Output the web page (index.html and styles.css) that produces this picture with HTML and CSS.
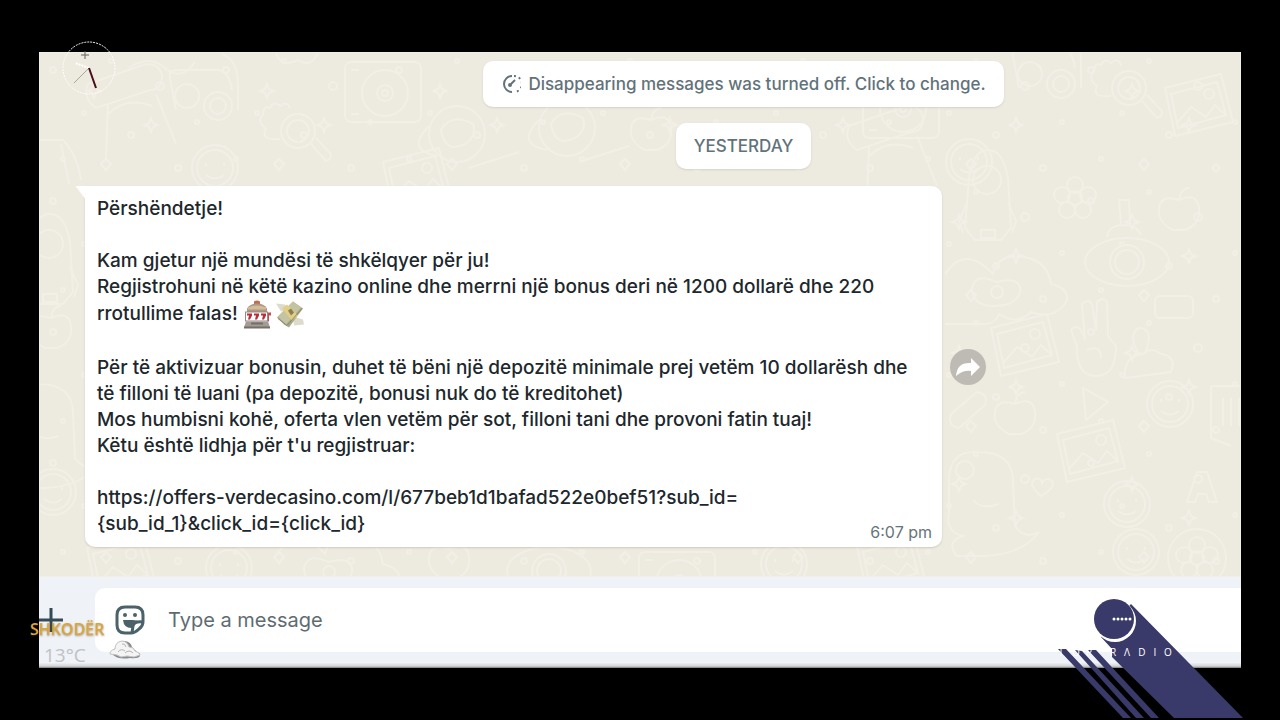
FILE: index.html
```html
<!DOCTYPE html>
<html lang="sq">
<head>
<meta charset="utf-8">
<meta name="viewport" content="width=device-width, initial-scale=1">
<title>Chat</title>
<link rel="stylesheet" href="styles.css">
</head>
<body class="broadcast">
<main class="screen">
  <section class="chat">
    <svg class="doodles" viewBox="0 0 1202 525" preserveAspectRatio="xMidYMid slice" aria-hidden="true">
      <defs>
        <pattern id="specks" width="173" height="131" patternUnits="userSpaceOnUse">
          <circle cx="14" cy="18" r="3"/><circle cx="72" cy="9" r="2"/><circle cx="121" cy="34" r="4"/><circle cx="158" cy="70" r="2"/>
          <circle cx="45" cy="61" r="2"/><circle cx="92" cy="83" r="3"/><circle cx="24" cy="107" r="2"/><circle cx="139" cy="116" r="3"/>
          <path d="M55 32l2 5 5 2-5 2-2 5-2-5-5-2 5-2zM112 66l2 5 5 2-5 2-2 5-2-5-5-2 5-2zM62 112l5-5 5 5-5 6z"/>
        </pattern>
        <g id="camera"><rect width="76" height="60" rx="6"/><circle cx="40" cy="31" r="23"/><circle cx="40" cy="31" r="8"/><circle cx="40" cy="31" r="3"/><path d="M6 8h8M6 52h8"/></g>
        <g id="smile"><circle r="23"/><circle r="18"/><path d="M-9-5v3M9-5v3M-9 7q9 7 18 0"/></g>
        <g id="rocket"><path d="M-22 40l4-50q4-28 19-28t20 28l3 50-10 12h-26z"/><circle cy="-8" r="14"/><path d="M-20 15l-8 18 4 12M21 15l8 18-4 12M-6 42h14v8H-6z"/></g>
        <g id="flower"><circle r="7"/><circle cy="-13" r="8"/><circle cx="13" cy="-3" r="8"/><circle cx="8" cy="12" r="8"/><circle cx="-8" cy="12" r="8"/><circle cx="-13" cy="-3" r="8"/></g>
        <g id="eye"><ellipse rx="42" ry="24"/><circle r="17"/><circle r="12"/><path d="M-20-25q2-12 16-12t18 10M-6-38l-2-24h10l1 24"/></g>
        <g id="cloud"><path d="M-62 2q20-30 48 0 4-16 20-18 34 0 38 28 22 6 14 20-12 16-34 8-14 14-32 2-4 10-14 10h-40M-35 16q4-16 24-6 26-6 24 10-4 14-26 14t-22-18z"/><circle cx="-10" cy="20" r="6"/></g>
        <g id="photo"><path d="M-32-20l56-14 12 48-58 14zM-26-14l46-12 9 33-48 13zM-20 15l14-16 15 10 9-12 12 11"/><circle cx="12" cy="-14" r="5"/></g>
        <g id="hand"><path d="M-18 4l-6-16q5-6 10 0l4 10-3-36q6-6 10 0l4 26 1-28q6-6 10 0l1 34 8 10q0 30-20 30t-19-30zM-8 8q14-6 14 8"/></g>
        <g id="dog"><path d="M-34 40v-32q0-30 30-28 34 0 34 30l2 44q10 14 24 6-16 22-54 24h-28q-12-14 6-20-18-4-14-24zM-10 28q8 10 26 4"/><circle cx="-18" cy="-2" r="9"/></g>
        <g id="lens"><circle r="17"/><circle r="11"/><path d="M13 13l15 17q6-2 5-7l-15-16M-18 8q-20 2-14-10-10-8-3-14 0-10 7-7 4-8 10-2 8-6 10 3"/></g>
        <g id="bottle"><path d="M-36-6l58-20q14 0 16 12 0 14-12 14l-54 18q-14-10-8-24zM-16 14l-2 54M32 4l20 50M-16 24q18-18 44-8"/></g>
        <g id="scooter"><path d="M-28 20l-6-32q-2-8 8-8l42 0q10 4 12 20M18-36q16 6 16 30v26"/><circle cx="-17" cy="6" r="12"/><circle cx="14" cy="16" r="14"/><circle cx="14" cy="16" r="8"/></g>
        <g id="fruit"><path d="M0-14q18-8 20 8t-14 22h-12q-16-8-14-22t20-8zM0-14q2-12 10-12"/></g>
        <g id="planet"><circle r="28"/><path d="M-16-4q10-18 32-6 4 12-8 20-20 10-24-14zM-28-8q-24 24 8 30M12 34l50-16"/></g>
      </defs>
      <rect class="specks" width="1202" height="525" fill="url(#specks)"/>
      <use href="#scooter" x="165" y="38"/><use href="#bottle" x="85" y="38"/><use href="#smile" x="176" y="116"/>
      <use href="#lens" x="259" y="79"/><use href="#camera" x="306" y="10"/>
      <use href="#planet" x="418" y="82"/><use href="#photo" x="376" y="130"/><path d="M-10 88h34q14 14 18 40M22 92l8 40M90 16q20-14 36 0t30-6M235-6q4 24 24 14 14 10 22-12"/>
      <use href="#planet" x="528" y="76"/><use href="#fruit" x="612" y="82"/><use href="#camera" x="824" y="26"/>
      <use href="#bottle" x="846" y="80"/><use href="#smile" x="930" y="110"/><use href="#scooter" x="1008" y="16"/>
      <use href="#lens" x="1090" y="36"/><use href="#photo" x="1158" y="56"/>
      <use href="#rocket" x="948" y="136"/><use href="#flower" x="1036" y="146"/><use href="#eye" x="1088" y="210"/><use href="#fruit" x="1140" y="162"/>
      <use href="#cloud" x="968" y="220"/><use href="#photo" x="984" y="296"/><use href="#hand" x="1056" y="290"/>
      <path d="M1086 326q-2-22 18-24 8-8 18 0 16 2 10 18zM1100 302q-12-20 0-26 16 0 6 26"/>
      <rect x="1116" y="244" width="38" height="22" rx="5"/><use href="#smile" x="1131" y="352"/><use href="#fruit" x="976" y="366"/>
      <path d="M1044 336l25 14-22 18zM912 362l26-22q12 2 8 13l-26 23q-12-2-8-14zM1172 334h30M1172 334v52l20 8M1184 346v28M1192 346v28M1200 346v28"/>
      <use href="#dog" x="944" y="420"/><use href="#photo" x="1050" y="402"/><use href="#smile" x="1088" y="452"/><use href="#smile" x="1097" y="500"/>
      <path d="M1148 450l10-30h10l10 30h-8l-3-8h-8l-3 8zM1002 444q-14-12-6-17 6-2 7 4 4-7 10-2 4 6-11 15z"/>
      <circle cx="1158" cy="506" r="29"/><use href="#flower" x="1158" y="506"/>
      <use href="#rocket" x="10" y="200"/><use href="#fruit" x="12" y="280"/><use href="#dog" x="4" y="352"/><use href="#smile" x="14" y="440"/>
      <use href="#photo" x="80" y="516"/><use href="#smile" x="190" y="516"/><use href="#cloud" x="300" y="500"/><use href="#fruit" x="410" y="511"/><use href="#eye" x="510" y="519"/><use href="#camera" x="600" y="500"/><use href="#smile" x="745" y="512"/><use href="#photo" x="850" y="514"/>
    </svg>
    <div class="notices">
      <button class="chip" type="button">
        <svg class="timer" viewBox="0 0 20 20" aria-hidden="true"><path d="M11 2a8 8 0 1 0 0 16"/><path class="dashes" d="M13 2a8 8 0 0 1 0 16"/><path d="M10 10l4-4"/><circle cx="9" cy="11" r="1"/></svg>
        <span>Disappearing messages was turned off. Click to change.</span>
      </button>
      <div class="chip">YESTERDAY</div>
    </div>
    <div class="message-row">
      <article class="bubble">
        <svg class="tail" viewBox="0 0 10 14" aria-hidden="true"><path d="M10 14V0H1q-2 0 0 2z"/></svg>
        <p>Përshëndetje!</p>
        <p>Kam gjetur një mundësi të shkëlqyer për ju!<br>Regjistrohuni në këtë kazino online dhe merrni një bonus deri në 1200 dollarë dhe 220<br>rrotullime falas! <svg class="emoji" viewBox="0 0 28 28" role="img" aria-label="slot machine"><path fill="#bd6e52" d="M11 1q3-2 6 0v4h-6z"/><path fill="#a99a83" d="M4 8q3-5 10-5t10 5v4H4z"/><path fill="#d8b999" d="M5 7q9-4 18 0v2H5z"/><path fill="#918b84" d="M2 11h23v10H2z"/><path fill="#fff" d="M3 12h21v8H3z"/><path fill="#bb2d38" d="M4 13h5v2l-2 4H5l1-4H4zM11 13h5v2l-2 4h-2l1-4h-2zM18 13h5v2l-2 4h-2l1-4h-2z"/><path fill="#c64c53" d="M25 12h3v3h-2v6h-1z"/><path fill="#a29c94" d="M3 21h22l2 6H1z"/><path fill="#756f69" d="M1 26h26v2H1zM8 22h12v2H8z"/></svg> <svg class="emoji" viewBox="0 0 28 28" role="img" aria-label="money with wings"><path fill="#dddccc" d="M0 3l9 1 3 5-7 2zM17 16l10 3 1 5-10 1z"/><path fill="#a8a98a" d="M1 17L17 1l10 7-14 19-5-3z"/><path fill="#c5c4a2" d="M2 16L17 1l8 6-15 17z"/><path fill="#e3ce85" d="M6 8l5-4 11 11-6 5z"/><path fill="#8a7f52" d="M12 10l3-2 3 4-3 3z"/><path fill="none" stroke="#8c8d72" d="M2 18l9 7L26 8"/></svg></p>
        <p>Për të aktivizuar bonusin, duhet të bëni një depozitë minimale prej vetëm 10 dollarësh dhe<br>të filloni të luani (pa depozitë, bonusi nuk do të kreditohet)<br>Mos humbisni kohë, oferta vlen vetëm për sot, filloni tani dhe provoni fatin tuaj!<br>Këtu është lidhja për t'u regjistruar:</p>
        <p>https://offers-verdecasino.com/l/677beb1d1bafad522e0bef51?sub_id=<br>{sub_id_1}&amp;click_id={click_id}</p>
        <time class="time">6:07 pm</time>
      </article>
      <button class="forward" type="button" aria-label="Forward">
        <svg viewBox="0 0 36 36" aria-hidden="true"><path d="M6 27q1-14 15-13V9l9 9-9 9v-5q-8-1-15 5z"/></svg>
      </button>
    </div>
  </section>
  <form class="composer">
    <button class="attach" type="button" aria-label="Attach"><svg viewBox="0 0 24 24" aria-hidden="true"><path d="M12 0v24M0 12h24"/></svg></button>
    <div class="field">
      <button class="sticker" type="button" aria-label="Stickers">
        <svg viewBox="0 0 30 30" aria-hidden="true"><path d="M10 2h10q8 0 8 8v7q0 4-4 7-4 4-8 4h-6q-8 0-8-8V10q0-8 8-8z"/><path d="M28 17q-9-1-10 4l-1 7"/><path class="solid" d="M8 15h10q4 0 6 2-5 1-6 6-9 1-10-8z"/><circle class="solid" cx="10" cy="10" r="2"/><circle class="solid" cx="20" cy="10" r="2"/></svg>
      </button>
      <input class="message-input" type="text" aria-label="Type a message" placeholder="Type a message">
    </div>
  </form>
</main>

<svg class="clock" viewBox="0 0 56 56" aria-hidden="true">
  <circle class="dial" cx="28" cy="28" r="26"/>
  <path class="mark" d="M24 11v8M20 15h8"/>
  <path class="hour" d="M28 28l-14-5"/><path class="second" d="M28 28L13 43"/><path class="minute" d="M28 28l7 20"/>
</svg>

<aside class="weather">
  <div class="city">SHKODËR</div>
  <div class="reading"><span>13°C</span>
    <svg class="cloud-icon" viewBox="0 0 32 20" aria-label="Cloudy" role="img"><path class="cloud-shade" d="M4 15q-2-7 5-7 1-7 7-7 6 1 7 6l5 5q4 1 3 4-2 3-10 2-11 2-17-3z"/><path class="cloud-top" d="M1 14q0-4 5-5 0-7 7-8 5 0 7 6 5 0 6 4 4 1 5 4l-6 2-7-1-6 1-4-2z"/><path class="cloud-line" d="M9 12q3-4 7-1M16 13q4-4 8 0M13 4q3-1 4 3"/></svg>
  </div>
</aside>

<svg class="station" viewBox="0 0 190 125" role="img" aria-label="Top Radio">
  <path class="beam" d="M76 9L188 123H119L57 62V54L46 42z"/>
  <path class="beam" d="M3 54H11L76 123H68zM20 55l7 1L89 123H81zM33 55h8L104 123H96z"/>
  <circle class="ring" cx="60" cy="26" r="21"/><circle class="disc" cx="59" cy="24" r="20"/>
  <path class="dots" d="M59 24h17"/>
  <text class="name" x="6 21 34 58 72 87 100 113" y="61">TOPRΛDIO</text>
</svg>
</body>
</html>
```
FILE: styles.css
```css
* { box-sizing: border-box; }

.broadcast {
  margin: 0;
  min-height: 100vh;
  padding: 52px 39px;
  display: flex;
  position: relative;
  overflow: hidden;
  background: #000;
  font-family: Inter, "Liberation Sans", sans-serif;
}

button, input { font: inherit; border: 0; margin: 0; padding: 0; background: none; }

.screen {
  flex: 1;
  min-width: 0;
  display: flex;
  flex-direction: column;
}

.chat {
  flex: 1;
  position: relative;
  padding: 9px 0 29px 46px;
  background: #edeae0;
}

.doodles {
  position: absolute;
  inset: 0;
  width: 100%;
  height: 100%;
  fill: none;
  stroke: #f2efe6;
  stroke-width: 2;
  overflow: hidden;
}

.notices {
  position: relative;
  padding-left: 161px;
  display: flex;
  flex-direction: column;
  align-items: center;
  gap: 16px;
}

.chip {
  display: flex;
  align-items: center;
  gap: 7px;
  min-height: 46px;
  padding: 0 18px;
  border-radius: 10px;
  background: #fff;
  box-shadow: 0 1px 2px rgba(90, 80, 50, 0.15);
  color: #62727a;
  font-size: 17px;
  font-weight: 500;
  line-height: 26px;
}

.timer {
  width: 20px;
  height: 20px;
  fill: none;
  stroke: currentColor;
  stroke-width: 2;
}

.dashes { stroke-dasharray: 2 3; }

.message-row {
  position: relative;
  margin-top: 17px;
  display: flex;
  align-items: center;
  gap: 8px;
}

.bubble {
  position: relative;
  width: 857px;
  padding: 10px 10px 10px 12px;
  border-radius: 0 10px 10px 10px;
  background: #fff;
  box-shadow: 0 1px 2px rgba(90, 80, 50, 0.2);
  color: #20272c;
  font-size: 19px;
  font-weight: 500;
  line-height: 26px;
}

.bubble p { margin: 0 0 26px; }
.bubble p:last-of-type { margin: 0; }

.tail {
  position: absolute;
  top: 0;
  left: -9px;
  width: 10px;
  height: 14px;
  fill: #fff;
}

.emoji {
  width: 28px;
  height: 29px;
  vertical-align: middle;
}

.time {
  position: absolute;
  right: 10px;
  bottom: 4px;
  color: #677479;
  font-size: 16px;
  font-weight: 400;
  line-height: 22px;
}

.forward {
  width: 36px;
  height: 36px;
  border-radius: 50%;
  background: #bdbbb3;
}

.forward svg { display: block; fill: #fff; }

.composer {
  display: flex;
  padding: 11px 0 16px;
  background: linear-gradient(#eff2f7 0, #eff2f7 94%, #d2d3d5 98%, #77787a 100%);
}

.attach {
  width: 56px;
  display: flex;
  align-items: center;
}

.attach svg {
  width: 24px;
  height: 24px;
  fill: none;
  stroke: #344b55;
  stroke-width: 3;
}

.field {
  flex: 1;
  height: 64px;
  padding-left: 20px;
  display: flex;
  align-items: center;
  gap: 23px;
  border-radius: 10px 0 0 10px;
  background: #fff;
}

.sticker { width: 30px; height: 30px; }

.sticker svg {
  display: block;
  fill: none;
  stroke: #4b626b;
  stroke-width: 3;
}

.sticker .solid { fill: #4b626b; stroke: none; }

.message-input {
  flex: 1;
  min-width: 0;
  outline: 0;
  color: #20272c;
  font-size: 20px;
  line-height: 28px;
}

.message-input::placeholder { color: #5e6c72; opacity: 1; }

.clock {
  position: absolute;
  top: 40px;
  left: 61px;
  width: 56px;
  height: 56px;
  fill: none;
}

.dial { stroke: #fff; stroke-dasharray: 2 1; }
.mark { stroke: #66635e; }
.hour { stroke: #fff; stroke-width: 2; stroke-dasharray: 2 1; }
.second { stroke: #aaa69f; }
.minute { stroke: #4a0d1c; stroke-width: 2; }

.weather {
  position: absolute;
  left: 30px;
  bottom: 50px;
  font-family: "Open Sans", "Noto Sans", sans-serif;
}

.city {
  color: #dba63b;
  font-size: 16px;
  font-weight: 600;
  line-height: 22px;
  text-shadow: 0 1px 2px rgba(80, 60, 20, 0.5);
}

.reading {
  padding-left: 14px;
  display: flex;
  align-items: center;
  gap: 23px;
  color: #bfc1c4;
  font-size: 19px;
  line-height: 26px;
}

.cloud-icon { width: 32px; height: 20px; margin-bottom: 10px; }
.cloud-shade { fill: #8b8b8b; }
.cloud-top { fill: #f4f4f4; stroke: #c2c2c2; }
.cloud-line { fill: none; stroke: #b4b4b4; }

.station {
  position: absolute;
  right: 35px;
  bottom: 0;
  width: 190px;
  height: 125px;
}

.beam, .disc { fill: #393a69; }
.ring { fill: #fff; }
.dots {
  stroke: #fff;
  stroke-width: 3;
  stroke-linecap: round;
  stroke-dasharray: 0 4;
}
.name {
  fill: #fff;
  font-family: "Open Sans", sans-serif;
  font-size: 10px;
  text-anchor: middle;
}
```
